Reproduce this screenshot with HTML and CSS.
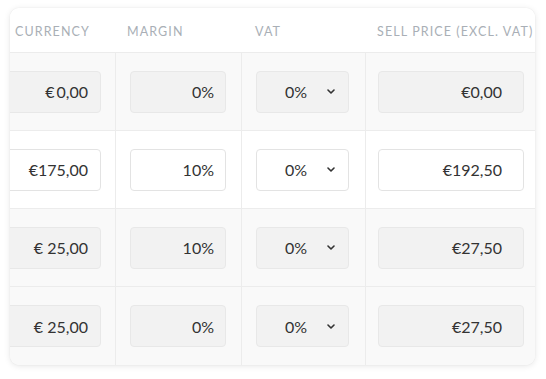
FILE: index.html
```html
<!DOCTYPE html>
<html>
<head>
<meta charset="utf-8">
<link rel="stylesheet" href="styles.css">
</head>
<body>
<div class="card">
  <div class="row head">
    <div class="cell c1"><span class="th th1">CURRENCY</span></div>
    <div class="cell c2"><span class="th">MARGIN</span></div>
    <div class="cell c3"><span class="th">VAT</span></div>
    <div class="cell c4"><span class="th">SELL PRICE (EXCL. VAT)</span></div>
  </div>

  <div class="row grey">
    <div class="cell c1 body"><div class="inp dis w1">€&#8201;0,00</div></div>
    <div class="cell c2 body"><div class="inp dis w2">0%</div></div>
    <div class="cell c3 body"><div class="sel dis"><span>0%</span><svg class="chev" width="8" height="5" viewBox="0 0 8 5"><path d="M1 1 L4 4 L7 1" fill="none" stroke="#333" stroke-width="1.6" stroke-linecap="round" stroke-linejoin="round"/></svg></div></div>
    <div class="cell c4 body"><div class="inp dis w4">€0,00</div></div>
  </div>

  <div class="row">
    <div class="cell c1 body"><div class="inp w1">€175,00</div></div>
    <div class="cell c2 body"><div class="inp w2">10%</div></div>
    <div class="cell c3 body"><div class="sel"><span>0%</span><svg class="chev" width="8" height="5" viewBox="0 0 8 5"><path d="M1 1 L4 4 L7 1" fill="none" stroke="#333" stroke-width="1.6" stroke-linecap="round" stroke-linejoin="round"/></svg></div></div>
    <div class="cell c4 body"><div class="inp w4">€192,50</div></div>
  </div>

  <div class="row grey">
    <div class="cell c1 body"><div class="inp dis w1">€ 25,00</div></div>
    <div class="cell c2 body"><div class="inp dis w2">10%</div></div>
    <div class="cell c3 body"><div class="sel dis"><span>0%</span><svg class="chev" width="8" height="5" viewBox="0 0 8 5"><path d="M1 1 L4 4 L7 1" fill="none" stroke="#333" stroke-width="1.6" stroke-linecap="round" stroke-linejoin="round"/></svg></div></div>
    <div class="cell c4 body"><div class="inp dis w4">€27,50</div></div>
  </div>

  <div class="row grey last">
    <div class="cell c1 body"><div class="inp dis w1">€ 25,00</div></div>
    <div class="cell c2 body"><div class="inp dis w2">0%</div></div>
    <div class="cell c3 body"><div class="sel dis"><span>0%</span><svg class="chev" width="8" height="5" viewBox="0 0 8 5"><path d="M1 1 L4 4 L7 1" fill="none" stroke="#333" stroke-width="1.6" stroke-linecap="round" stroke-linejoin="round"/></svg></div></div>
    <div class="cell c4 body"><div class="inp dis w4">€27,50</div></div>
  </div>
</div>
</body>
</html>
```

FILE: styles.css
```css
* { box-sizing: border-box; }
html, body { margin: 0; background: #ffffff; }
body {
  padding: 8px 11px 14px 10px;
  font-family: Lato, "Open Sans", sans-serif;
  color: #333333;
}
.card {
  width: 525px;
  height: 357px;
  background: #ffffff;
  border-radius: 9px;
  box-shadow: 0 1px 6px rgba(0,0,0,0.10), 0 0 1px rgba(0,0,0,0.12);
  overflow: hidden;
}
.row {
  display: grid;
  grid-template-columns: 105px 126px 124px 170px;
  height: 78px;
  border-bottom: 1px solid #ececec;
}
.row.last { border-bottom: none; height: 78px; }
.row.grey { background: #f9f9f9; }
.row.head {
  height: 45px;
  background: #ffffff;
  border-bottom: 1px solid #ececec;
}
.cell {
  display: flex;
  align-items: center;
  min-width: 0;
}
.cell.body.c2, .cell.body.c3, .cell.body.c4 { border-left: 1px solid #ececec; }
.head .cell { align-items: center; padding-top: 2px; }
.th {
  font-size: 12.5px;
  letter-spacing: 1.1px;
  color: #a9afb6;
  white-space: nowrap;
}
.head .c1 { padding-left: 5px; }
.head .c2 { padding-left: 12px; }
.head .c3 { padding-left: 14px; }
.head .c4 { padding-left: 12px; }

.body.c1 { justify-content: flex-end; padding-right: 14px; }
.body.c2 { padding-left: 14px; }
.body.c3 { padding-left: 14px; }
.body.c4 { padding-left: 12px; }

.inp, .sel {
  height: 42px;
  border: 1px solid #e3e3e3;
  border-radius: 4px;
  background: #ffffff;
  font-size: 16px;
  display: flex;
  align-items: center;
  white-space: nowrap;
  flex-shrink: 0;
}
.inp { justify-content: flex-end; padding-right: 11px; }
.w1 { width: 130px; padding-right: 12px; }
.dis { background: #f2f2f2; border-color: #e8e8e8; }
.w2 { width: 96px; }
.w4 { width: 146px; padding-right: 21px; }
.sel { width: 93px; padding-left: 28px; }
.chev { margin-left: 20px; }
```
